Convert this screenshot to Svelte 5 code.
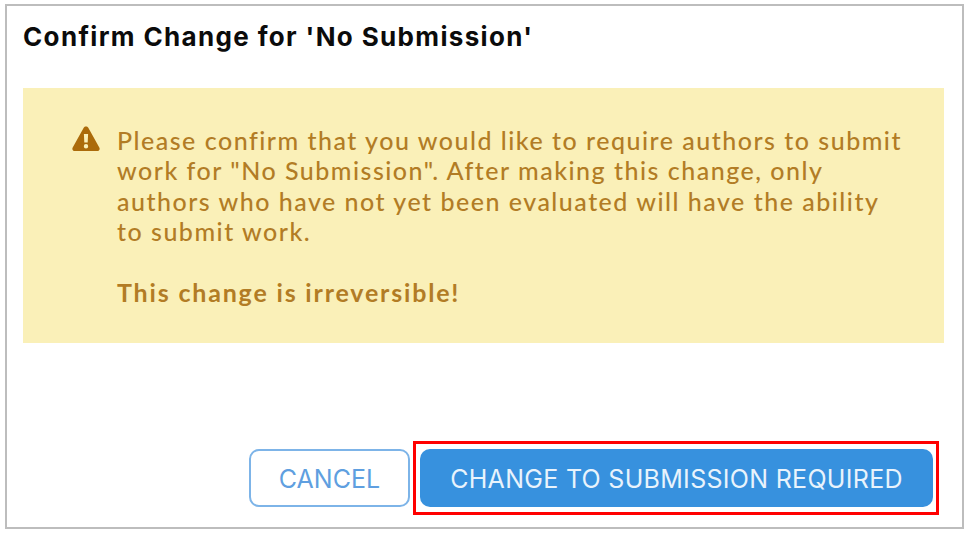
<script>
  let title = "Confirm Change for 'No Submission'";
</script>

<main>
  <div class="dialog">
    <h1>{title}</h1>
    <div class="alert">
      <svg class="icon" viewBox="0 0 28 25" width="28" height="25" aria-hidden="true">
        <path fill="#ab6b0a" fill-rule="evenodd" d="M14 .5c1 0 1.8.5 2.3 1.3l11 19.6c1 1.7-.2 3.6-2.2 3.6H2.9C.9 25-.3 23.1.7 21.4l11-19.6C12.2 1 13 .5 14 .5zM11.9 8l.4 8.6h3.4l.4-8.6h-4.2zM14 18a2.2 2.2 0 1 0 0 4.4A2.2 2.2 0 0 0 14 18z" />
      </svg>
      <div class="message">
        <p>Please confirm that you would like to require authors to submit work for "No Submission". After making this change, only authors who have not yet been evaluated will have the ability to submit work.</p>
        <p class="warn">This change is irreversible!</p>
      </div>
    </div>
    <div class="actions">
      <button class="cancel">CANCEL</button>
      <div class="highlight">
        <button class="confirm">CHANGE TO SUBMISSION REQUIRED</button>
      </div>
    </div>
  </div>
</main>

<style>
  :global(body) {
    margin: 0;
    background: #fff;
  }

  main {
    width: 968px;
    height: 535px;
    padding: 4px 0 0 5px;
    box-sizing: border-box;
  }

  .dialog {
    width: 959px;
    height: 525px;
    box-sizing: border-box;
    border: 2px solid #bdbdbd;
    padding: 0 17px 0 16px;
    display: flex;
    flex-direction: column;
  }

  h1 {
    margin: 0;
    padding-top: 15px;
    height: 82px;
    box-sizing: border-box;
    font: 700 26px/32px Inter, "Liberation Sans", sans-serif;
    letter-spacing: 1.35px;
    color: #0b0b0b;
  }

  .alert {
    width: 921px;
    height: 255px;
    box-sizing: border-box;
    background: #faf0b8;
    padding: 37px 33px 0 49px;
    display: flex;
    gap: 17px;
    color: #b27c25;
  }

  .icon {
    flex: none;
    margin-top: 1px;
  }

  .message {
    font: 500 25px/30.25px Lato, "Liberation Sans", sans-serif;
    letter-spacing: 1.5px;
  }

  .message p {
    margin: 0;
  }

  .warn {
    margin-top: 31px !important;
    font-weight: 700;
    letter-spacing: 1.82px;
  }

  .actions {
    display: flex;
    align-items: center;
    justify-content: flex-end;
    margin-top: 98px;
    margin-right: 6px;
    gap: 3px;
  }

  button {
    height: 58px;
    box-sizing: border-box;
    border-radius: 10px;
    font: 400 25px/1 Inter, "Liberation Sans", sans-serif;
    padding: 3px 0 0;
  }

  .cancel {
    width: 161px;
    background: #fff;
    border: 2px solid #7db4e8;
    color: #5f9fe0;
  }

  .highlight {
    border: 3px solid #f00;
    padding: 5px 3px 5px 4px;
    display: flex;
  }

  .confirm {
    width: 513px;
    background: #3791de;
    border: none;
    color: #e8f3fc;
    letter-spacing: 0.3px;
  }
</style>
